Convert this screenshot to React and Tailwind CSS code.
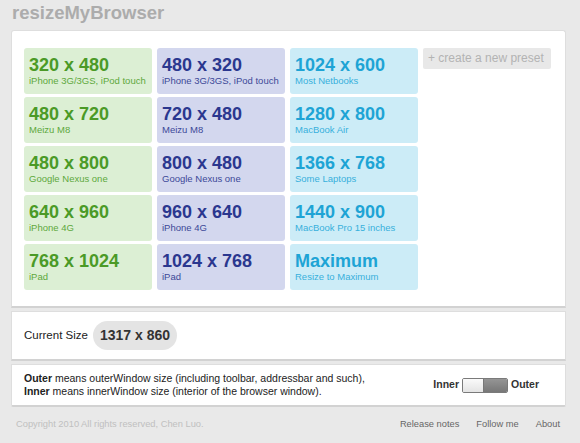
import React from 'react';

const presets = [
  { size: '320 x 480', label: 'iPhone 3G/3GS, iPod touch', tone: 'green' },
  { size: '480 x 320', label: 'iPhone 3G/3GS, iPod touch', tone: 'blue' },
  { size: '1024 x 600', label: 'Most Netbooks', tone: 'cyan' },
  { create: true },
  { size: '480 x 720', label: 'Meizu M8', tone: 'green' },
  { size: '720 x 480', label: 'Meizu M8', tone: 'blue' },
  { size: '1280 x 800', label: 'MacBook Air', tone: 'cyan' },
  null,
  { size: '480 x 800', label: 'Google Nexus one', tone: 'green' },
  { size: '800 x 480', label: 'Google Nexus one', tone: 'blue' },
  { size: '1366 x 768', label: 'Some Laptops', tone: 'cyan' },
  null,
  { size: '640 x 960', label: 'iPhone 4G', tone: 'green' },
  { size: '960 x 640', label: 'iPhone 4G', tone: 'blue' },
  { size: '1440 x 900', label: 'MacBook Pro 15 inches', tone: 'cyan' },
  null,
  { size: '768 x 1024', label: 'iPad', tone: 'green' },
  { size: '1024 x 768', label: 'iPad', tone: 'blue' },
  { size: 'Maximum', label: 'Resize to Maximum', tone: 'cyan' },
  null,
];

const tones = {
  green: { box: 'bg-[#dcefd4]', title: 'text-[#4b9a27]', sub: 'text-[#5da83c]' },
  blue: { box: 'bg-[#d3d7ee]', title: 'text-[#2b378f]', sub: 'text-[#3c4898]' },
  cyan: { box: 'bg-[#ccecf7]', title: 'text-[#1ea4d5]', sub: 'text-[#38b0dc]' },
};

function Preset({ item }) {
  if (!item) return <div />;
  if (item.create) {
    return (
      <div className="self-start h-[21px] rounded-[2px] bg-[#e8e8e8] px-[5px] text-[12px] leading-[21px] text-[#b3b3b3]">
        + create a new preset
      </div>
    );
  }
  const t = tones[item.tone];
  return (
    <div className={`h-[46px] rounded-[3px] px-[5px] pt-[7px] ${t.box}`}>
      <div className={`text-[18px] font-bold leading-[20px] ${t.title}`}>{item.size}</div>
      <div className={`text-[9.5px] leading-[12px] ${t.sub}`}>{item.label}</div>
    </div>
  );
}

function Toggle() {
  return (
    <div className="flex items-center gap-[3px]">
      <span className="text-[10.5px] font-bold text-[#333]">Inner</span>
      <div className="flex h-[15px] w-[46px] overflow-hidden rounded-[2px] border border-[#7a7a7a]">
        <div className="w-[20px] bg-gradient-to-b from-[#fafafa] to-[#e4e4e4]" />
        <div className="flex-1 border-l border-[#777] bg-gradient-to-b from-[#959595] to-[#777]" />
      </div>
      <span className="text-[10.5px] font-bold text-[#333]">Outer</span>
    </div>
  );
}

export default function App() {
  return (
    <div className="h-[443px] w-[580px] overflow-hidden bg-[#e9e9e9] font-['Liberation_Sans',Arial,sans-serif]">
      <div className="h-[30px] pl-[12px] pt-[2px] text-[18.5px] font-bold leading-[22px] text-[#acacac]">
        resizeMyBrowser
      </div>

      <div className="ml-[11px] flex w-[555px] flex-col gap-[3px]">
        <div className="rounded-t-[3px] border border-b-2 border-[#dedede] border-b-[#d2d2d2] bg-white pb-[16px] pl-[12px] pt-[17px]">
          <div className="grid grid-cols-[128px_128px_128px_128px] gap-x-[5px] gap-y-[3px]">
            {presets.map((p, i) => (
              <Preset key={i} item={p} />
            ))}
          </div>
        </div>

        <div className="flex h-[50px] items-center gap-[5px] border border-b-2 border-[#dedede] border-b-[#d2d2d2] bg-white pl-[12px]">
          <span className="text-[11.5px] text-[#222]">Current Size</span>
          <span className="flex h-[29px] items-center rounded-full bg-[#e4e4e4] px-[7px] text-[14px] font-bold text-[#333]">
            1317 x 860
          </span>
        </div>

        <div className="flex h-[43px] items-center justify-between rounded-b-[2px] border border-b-2 border-[#dedede] border-b-[#d2d2d2] bg-white pl-[12px] pr-[26px]">
          <div className="text-[10.5px] leading-[13px] text-[#222]">
            <p><b>Outer</b> means outerWindow size (including toolbar, addressbar and such),</p>
            <p><b>Inner</b> means innerWindow size (interior of the browser window).</p>
          </div>
          <Toggle />
        </div>
      </div>

      <div className="flex h-[35px] items-center justify-between pl-[16px] pr-[20px] text-[9.3px]">
        <span className="text-[#c0c0c0]">Copyright 2010 All rights reserved, Chen Luo.</span>
        <div className="flex gap-[17px] text-[#666]">
          <span>Release notes</span>
          <span>Follow me</span>
          <span>About</span>
        </div>
      </div>
    </div>
  );
}
